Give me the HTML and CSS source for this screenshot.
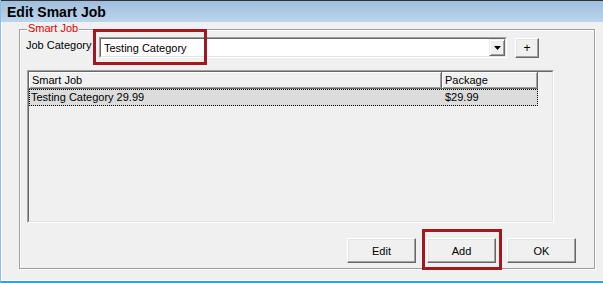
FILE: index.html
```html
<!DOCTYPE html>
<html>
<head>
<meta charset="utf-8">
<link rel="stylesheet" href="styles.css">
</head>
<body>
<div class="window">
  <div class="titlebar">Edit Smart Job</div>
  <div class="group">
    <span class="legend">Smart Job</span>
    <div class="row1">
      <span class="lbl">Job Category</span>
      <div class="combo">
        <div class="combo-inner">
          <span class="combo-text">Testing Category</span>
          <span class="combo-btn"><svg width="7" height="4" viewBox="0 0 7 4"><polygon points="0,0 7,0 3.5,4" fill="#000"/></svg></span>
        </div>
      </div>
      <button class="btn plus">+</button>
    </div>
    <div class="list">
      <div class="list-inner">
        <div class="list-head">
          <div class="hcell c1">Smart Job</div>
          <div class="hcell c2">Package</div>
        </div>
        <div class="list-row">
          <div class="cell c1">Testing Category 29.99</div>
          <div class="cell c2">$29.99</div>
        </div>
      </div>
    </div>
    <div class="buttons">
      <button class="btn act">Edit</button>
      <button class="btn act">Add</button>
      <button class="btn act">OK</button>
    </div>
    <div class="mark mark-combo"></div>
    <div class="mark mark-add"></div>
  </div>
</div>
</body>
</html>
```

FILE: styles.css
```css
html, body {
  margin: 0;
  padding: 0;
  background: #f0f0f0;
}
body {
  font-family: "Liberation Sans", Arial, sans-serif;
  font-size: 11px;
  color: #000;
}
.window {
  width: 603px;
  height: 283px;
  box-sizing: border-box;
  background: #f0f0f0;
  border-left: 1px solid #8cbde6;
  border-bottom: 2px solid #3da0dc;
  box-shadow: inset 1px -1px 0 #fff;
  overflow: hidden;
}
.titlebar {
  height: 22px;
  box-sizing: border-box;
  border-top: 1px solid #333;
  background: linear-gradient(#a0bedd, #bcd4ec);
  font-family: "Liberation Sans", Arial, sans-serif;
  font-weight: bold;
  font-size: 14px;
  line-height: 20px;
  padding: 1px 0 0 6px;
}
.group {
  position: relative;
  margin: 7px 0 0 18px;
  width: 576px;
  height: 240px;
  box-sizing: border-box;
  border: 1px solid #a0a0a0;
  box-shadow: inset 1px 1px 0 #fff, 1px 1px 0 #fff;
  padding: 7px 18px 0 6px;
  display: flex;
  flex-direction: column;
}
.legend {
  position: absolute;
  left: 7px;
  top: -8px;
  padding: 0 1px;
  background: #f0f0f0;
  color: #e00000;
  line-height: 13px;
}
.row1 {
  display: flex;
  align-items: flex-start;
  height: 21px;
}
.lbl {
  width: 73px;
  flex: none;
  line-height: 13px;
  margin-top: 2px;
}
.combo {
  width: 408px;
  height: 21px;
  box-sizing: border-box;
  border: 1px solid;
  border-color: #a0a0a0 #fff #fff #a0a0a0;
  display: flex;
}
.combo-inner {
  flex: 1;
  display: flex;
  align-items: center;
  border: 1px solid;
  border-color: #696969 #e3e3e3 #e3e3e3 #696969;
  background: #fff;
}
.combo-text {
  flex: 1;
  padding-left: 3px;
}
.combo-btn {
  width: 16px;
  height: 17px;
  box-sizing: border-box;
  background: #f0f0f0;
  border: 1px solid;
  border-color: #f0f0f0 #696969 #696969 #f0f0f0;
  box-shadow: inset 1px 1px 0 #fff, inset -1px -1px 0 #a0a0a0;
  display: flex;
  align-items: center;
  justify-content: center;
}
.btn {
  font-family: "Liberation Sans", Arial, sans-serif;
  font-size: 11px;
  color: #000;
  background: #f0f0f0;
  border: 1px solid;
  border-color: #fff #696969 #696969 #fff;
  box-shadow: inset -1px -1px 0 #a0a0a0, inset 1px 1px 0 #e3e3e3;
  padding: 0;
  margin: 0;
  box-sizing: border-box;
}
.plus {
  width: 24px;
  height: 20px;
  margin-left: 8px;
  margin-top: 1px;
  font-size: 12px;
}
.list {
  margin: 12px 0 0 1px;
  width: 527px;
  height: 153px;
  box-sizing: border-box;
  border: 1px solid;
  border-color: #a0a0a0 #fff #fff #a0a0a0;
  display: flex;
}
.list-inner {
  flex: 1;
  border: 1px solid;
  border-color: #696969 #e3e3e3 #e3e3e3 #696969;
  background: #f0f0f0;
}
.list-head, .list-row {
  display: flex;
}
.hcell {
  height: 17px;
  box-sizing: border-box;
  border-right: 1px solid #696969;
  border-bottom: 1px solid #696969;
  box-shadow: inset 1px 1px 0 #fff, inset -1px -1px 0 #a0a0a0;
  padding-left: 3px;
  line-height: 16px;
}
.c1 { width: 413px; }
.c2 { width: 96px; }
.list-row {
  width: 509px;
  height: 17px;
  background: #dcdcdc;
  outline: 1px dotted #000;
  outline-offset: -1px;
  line-height: 17px;
}
.cell.c1 { padding-left: 2px; box-sizing: border-box; }
.cell.c2 { padding-left: 3px; box-sizing: border-box; }
.buttons {
  margin-top: 15px;
  display: flex;
  justify-content: flex-end;
  gap: 11px;
}
.act {
  width: 69px;
  height: 25px;
}
.mark {
  position: absolute;
  box-sizing: border-box;
  border: 3px solid #a3171f;
  pointer-events: none;
}
.mark-combo {
  left: 73px;
  top: -1px;
  width: 114px;
  height: 36px;
}
.mark-add {
  left: 402px;
  top: 199px;
  width: 80px;
  height: 41px;
}
```
